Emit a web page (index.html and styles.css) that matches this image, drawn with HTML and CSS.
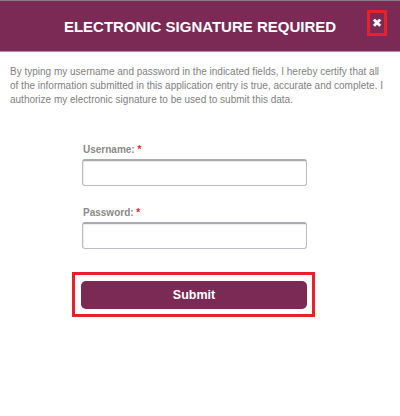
FILE: index.html
```html
<!DOCTYPE html>
<html>
<head>
<meta charset="utf-8">
<link rel="stylesheet" href="styles.css">
</head>
<body>
<div class="modal">
  <header class="modal-header">
    <h1 class="title">ELECTRONIC SIGNATURE REQUIRED</h1>
    <button class="close" type="button" aria-label="Close">&#x2716;</button>
  </header>
  <p class="intro">By typing my username and password in the indicated fields, I hereby certify that all of the information submitted in this application entry is true, accurate and complete. I authorize my electronic signature to be used to submit this data.</p>
  <form class="form">
    <label class="label">Username: <span class="req">*</span></label>
    <input class="input" type="text">
    <label class="label pw">Password: <span class="req">*</span></label>
    <input class="input" type="password">
    <div class="highlight">
      <button class="submit" type="button">Submit</button>
    </div>
  </form>
</div>
</body>
</html>
```
FILE: styles.css
```css
html, body {
  margin: 0;
  padding: 0;
  background: #fff;
  font-family: "Liberation Sans", Arial, sans-serif;
}
.modal {
  width: 400px;
  height: 416px;
}
.modal-header {
  position: relative;
  height: 50px;
  border-top: 1px solid #8c7a84;
  border-bottom: 1px solid #b58aa2;
  background: #7b2a55;
  display: flex;
  align-items: center;
  justify-content: center;
}
.title {
  margin: 0;
  padding-top: 1px;
  color: #fff;
  font-size: 15px;
  font-weight: bold;
}
.close {
  position: absolute;
  left: 367px;
  top: 9px;
  width: 20px;
  height: 26px;
  box-sizing: border-box;
  border: 3px solid #e8202a;
  background: transparent;
  color: #fff;
  font-size: 12px;
  font-weight: bold;
  padding: 0;
  line-height: 20px;
  font-family: "DejaVu Sans", sans-serif;
}
.intro {
  margin: 13px 10px 0 10px;
  color: #7f7f7f;
  font-size: 10px;
  line-height: 14px;
}
.form {
  margin: 37px 0 0 82px;
  width: 225px;
  display: flex;
  flex-direction: column;
}
.label {
  color: #8a8a8a;
  font-size: 10px;
  font-weight: bold;
  line-height: 12px;
  margin-bottom: 3px;
  padding-left: 1px;
}
.label.pw {
  margin-top: 21px;
}
.req {
  color: #e8202a;
}
.input {
  box-sizing: border-box;
  width: 225px;
  height: 27px;
  margin: 0;
  border: 1px solid #b9bcc4;
  border-top: 2px solid #a9abb0;
  border-radius: 3px;
  background: #fff;
  box-shadow: inset 1px 1px 1px rgba(0,0,0,0.08);
}
.highlight {
  margin: 23px 0 0 -10px;
  width: 243px;
  box-sizing: border-box;
  border: 3px solid #e8202a;
  padding: 6px 5px 5px 6px;
}
.submit {
  display: block;
  width: 226px;
  height: 28px;
  border: none;
  border-radius: 5px;
  background: #7b2a55;
  color: #fff;
  font-family: "Liberation Sans", Arial, sans-serif;
  font-size: 12.5px;
  font-weight: bold;
  padding: 0;
}
```
